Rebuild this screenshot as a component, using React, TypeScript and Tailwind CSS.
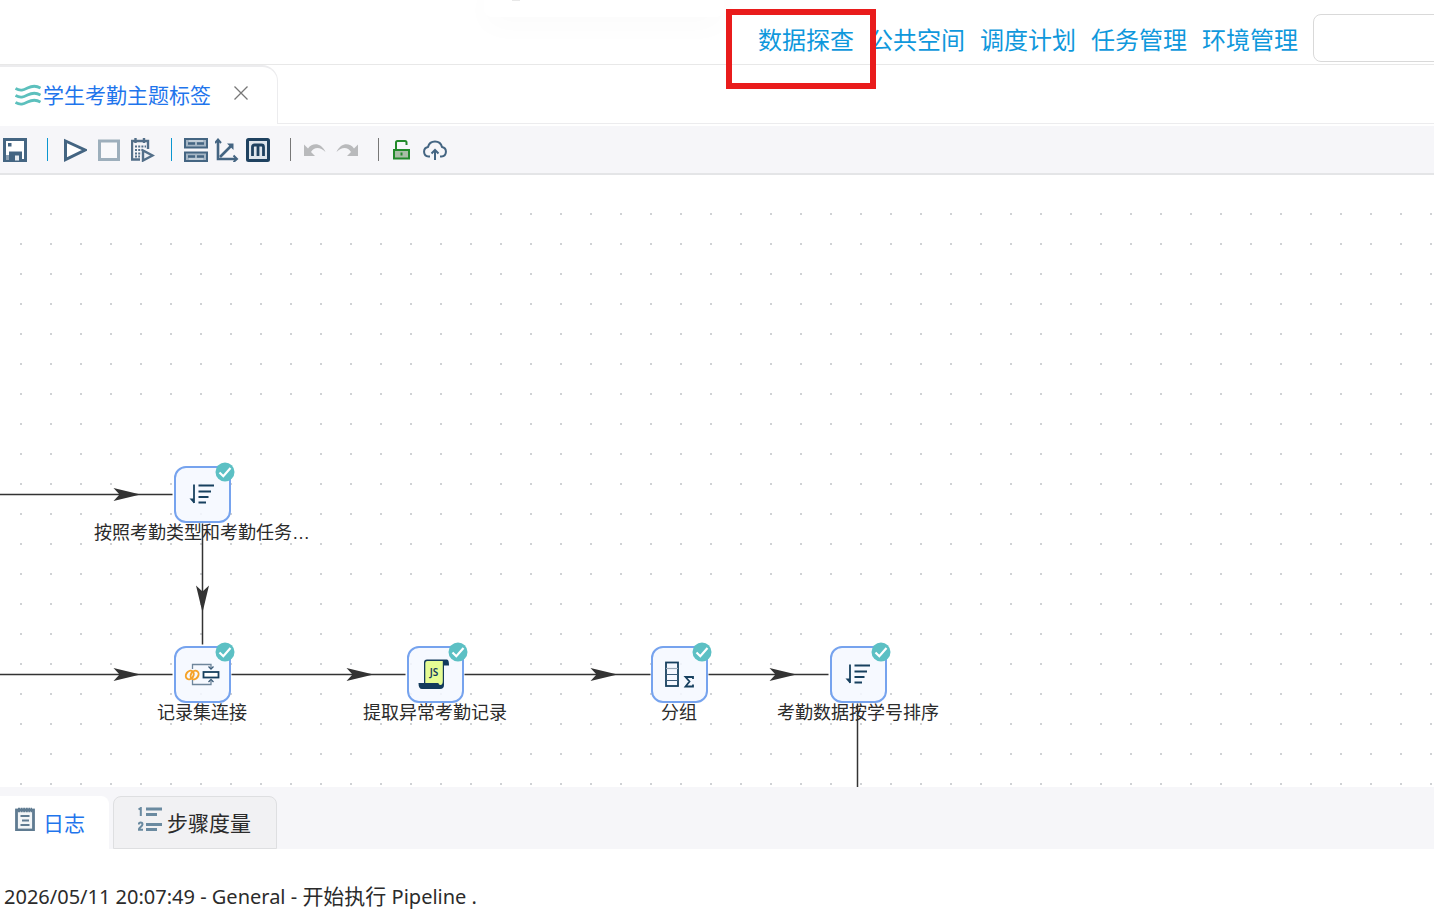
import React from 'react';
import clsx from 'clsx';

type NodeKind = 'sort' | 'join' | 'script' | 'group';

interface PipelineNode {
  id: string;
  kind: NodeKind;
  label: string;
  x: number;
  y: number;
}

interface Edge {
  from: [number, number];
  to: [number, number];
  // tip of the arrow head, left out where the head is off screen
  arrow?: [number, number];
}

const NAV_LINKS = ['数据探查', '公共空间', '调度计划', '任务管理', '环境管理'];

// x and y are the centre of the node box
const NODES: PipelineNode[] = [
  { id: 'sort-type', kind: 'sort', label: '按照考勤类型和考勤任务…', x: 202, y: 319 },
  { id: 'join', kind: 'join', label: '记录集连接', x: 202, y: 499 },
  { id: 'script', kind: 'script', label: '提取异常考勤记录', x: 435, y: 499 },
  { id: 'group', kind: 'group', label: '分组', x: 679, y: 499 },
  { id: 'sort-id', kind: 'sort', label: '考勤数据按学号排序', x: 858, y: 499 },
];

const EDGES: Edge[] = [
  { from: [-2, 319], to: [172, 319], arrow: [140, 319] },
  { from: [-2, 499], to: [172, 499], arrow: [140, 499] },
  { from: [202, 348], to: [202, 469], arrow: [202, 437] },
  { from: [231, 499], to: [405, 499], arrow: [373, 499] },
  { from: [464, 499], to: [650, 499], arrow: [617, 499] },
  { from: [708, 499], to: [828, 499], arrow: [796, 499] },
  { from: [857, 528], to: [857, 700] },
];

function SaveIcon() {
  return (
    <svg viewBox="0 0 24 24" className="h-6 w-6">
      <path d="M1.5 1.5h21v21h-21z" fill="#fff" stroke="#446582" strokeWidth="3" />
      <rect x="5" y="5" width="3.500" height="3.500" fill="#446582" />
      <path d="M6 13.500h13V24H6z" fill="#446582" />
      <rect x="12" y="17.500" width="4" height="5" fill="#e6ebf0" />
      <path d="M3 17h3v5H3z" fill="#8ca0b3" />
    </svg>
  );
}

function PlayIcon() {
  return (
    <svg viewBox="0 0 24 24" className="h-6 w-6">
      <path d="M2.500 3v18.500L22 12z" fill="#fff" stroke="#446582" strokeWidth="3" />
    </svg>
  );
}

function StopIcon() {
  return (
    <svg viewBox="0 0 24 24" className="h-6 w-6">
      <rect x="2.500" y="3" width="19" height="18.500" fill="#f8f9fb" stroke="#9dafbc" strokeWidth="3" />
    </svg>
  );
}

function ScheduleIcon() {
  return (
    <svg viewBox="0 0 24 24" className="h-6 w-6" fill="none" stroke="#536f89">
      <path d="M9 21.500H1V3h16v8" strokeWidth="2.400" />
      <path d="M4.500 0v5M13 0v5" strokeWidth="2.400" />
      <path d="M4 8.500h11M4 12h8M4 15.500h6M4 18.500h5" strokeWidth="2.200" strokeDasharray="2 1.200" />
      <path d="M12 12.500v10L21.500 17.500z" fill="#eef1f5" strokeWidth="2.400" />
    </svg>
  );
}

function ServersIcon() {
  return (
    <svg viewBox="0 0 24 24" className="h-6 w-6">
      <g fill="#a5b6c5" stroke="#446582" strokeWidth="2">
        <path d="M1 1h22v8.500H1zM1 14.500h22V23H1z" />
      </g>
      <path d="M4 5.500h7M13 5.500h7M4 18.500h7M13 18.500h7" stroke="#446582" strokeWidth="2.500" />
      <path d="M5 3h14M5 21h14" stroke="#dfe6ec" strokeWidth="1" />
    </svg>
  );
}

function AxesIcon() {
  return (
    <svg viewBox="0 0 24 24" className="h-6 w-6" fill="none" stroke="#446582" strokeWidth="2.600">
      <path d="M3 2v19h18" />
      <path d="M0 5l3-3.500L6 5M18.500 17.500L22 21l-3.500 3" strokeWidth="2" />
      <path d="M5 19L16.500 7.500" />
      <path d="M12 5.500h6.500V12z" fill="#446582" stroke="none" />
    </svg>
  );
}

function MetricsIcon() {
  return (
    <svg viewBox="0 0 24 24" className="h-6 w-6" fill="none" stroke="#1f4260">
      <rect x="1.500" y="1.500" width="21" height="21" rx="1" fill="#dfe6ec" strokeWidth="3" />
      <path d="M6.500 18V9q0-2 2-2h7q2 0 2 2v9M12 7v11" strokeWidth="2.800" />
    </svg>
  );
}

function UndoIcon({ flipped = false }: { flipped?: boolean }) {
  return (
    <svg viewBox="0 0 24 24" className={clsx('h-6 w-6', flipped && '-scale-x-100')}>
      <path d="M1 6.500v11.500h11l-4-4c3-5 9-5.500 14.500 0C18 4.500 9.500 4.500 5 10.500z" fill="#b9babc" />
    </svg>
  );
}

function UnlockIcon() {
  return (
    <svg viewBox="0 0 24 24" className="h-6 w-6" fill="none" stroke="#238a2b" strokeWidth="2">
      <path d="M7 11V4.500q0-1.500 1.500-1.500H16q1.500 0 1.500 1.500V7" />
      <rect x="5" y="12" width="15" height="8.500" fill="#a9bda6" />
      <path d="M12.500 14.500v3" />
    </svg>
  );
}

function CloudUploadIcon() {
  return (
    <svg viewBox="0 0 24 24" className="h-6 w-6" fill="none" stroke="#446582" strokeWidth="2">
      <path d="M7 18.500H5.500A4.800 4.800 0 0 1 5 9a7.200 7.200 0 0 1 14 0a4.800 4.800 0 0 1-.5 9.500H17" />
      <path d="M12 22V12M8.500 15.500L12 12l3.500 3.500" />
    </svg>
  );
}

function WavesIcon() {
  return (
    <svg viewBox="0 0 26 22" className="h-[22px] w-[26px]" fill="none" stroke="#5cc0bd" strokeWidth="2.800">
      <path d="M.5 4.500c5 3 8 1.500 12-.5s8-3 13 0" />
      <path d="M.5 11.500c5 3 8 1.500 12-.5s8-3 13 0" />
      <path d="M.5 18.500c5 3 8 1.500 12-.5s8-3 13 0" />
    </svg>
  );
}

function LogIcon() {
  return (
    <svg viewBox="0 0 20 24" className="h-6 w-5" fill="none" stroke="#5f7b91">
      <rect x="1.500" y="3" width="17" height="20" fill="#f2f5f7" strokeWidth="2.800" />
      <path d="M3 3h14" strokeWidth="4.500" strokeDasharray="2 .6" />
      <path d="M5.500 9h9M7 13.500h7M5.500 18h9" strokeWidth="2" />
    </svg>
  );
}

function StepsIcon() {
  return (
    <svg viewBox="0 0 24 24" className="h-6 w-6" fill="none" stroke="#6a8aa0">
      <path d="M8 2h16M8 7.500h11M8 17.500h16M8 22.500h11" strokeWidth="2.800" />
      <path d="M.5 2.500L2.800 1v8" strokeWidth="2" />
      <path d="M.8 17.500c0-2.800 3.700-2.600 3.700-.3C4.500 19.500.8 20.500.8 22.800H5" strokeWidth="2" />
    </svg>
  );
}

function NodeGlyph({ kind }: { kind: NodeKind }) {
  if (kind === 'sort') {
    return (
      <svg viewBox="0 0 36 36" className="h-9 w-9" fill="none" stroke="#17405f" strokeWidth="1.800">
        <path d="M10 7.500v18.500" />
        <path d="M5.500 21.500H10v5z" fill="#17405f" stroke="none" />
        <path d="M14.500 8.500H30M14.500 14.500h12.500M14.500 20h10M14.500 25.500h7.500" />
      </svg>
    );
  }
  if (kind === 'join') {
    return (
      <svg viewBox="0 0 36 36" className="h-9 w-9" fill="none">
        <g stroke="#6f869b" strokeWidth="1.300">
          <path d="M8.500 12V7.500h18.500V12M8.500 23v4.500H27V24" />
          <path d="M24.500 9.500l2.500 2.500 2.500-2.500M24.500 25l2.500-2.500 2.500 2.500" stroke="#3c5c78" />
        </g>
        <g stroke="#f5a32a" strokeWidth="2">
          <ellipse cx="5.800" cy="18" rx="3.600" ry="4.600" transform="rotate(35 5.800 18)" />
          <ellipse cx="10.600" cy="18" rx="3.600" ry="4.600" transform="rotate(35 10.600 18)" />
        </g>
        <rect x="19.500" y="15" width="15" height="5.500" fill="#fff" stroke="#17405f" strokeWidth="1.800" />
      </svg>
    );
  }
  if (kind === 'script') {
    return (
      <svg viewBox="0 0 36 36" className="h-9 w-9">
        <path d="M7 5.500q0-3 3-3h20q2 0 2 6h-5V28q0 4-4 4H5q-3.500 0-3.500-6H7z" fill="#123a5c" />
        <path d="M8.300 6q0-2 2-2h15.500V24q0 4-2.500 4-1.500 0-2-2H8.300z" fill="#e5fc94" />
        <text
          x="17"
          y="19"
          textAnchor="middle"
          className="font-['Noto_Sans'] text-[10px] font-semibold"
          fill="#123a5c"
        >
          JS
        </text>
      </svg>
    );
  }
  return (
    <svg viewBox="0 0 36 36" className="h-9 w-9">
      <rect x="5" y="5.500" width="12" height="23.500" fill="#f5f8ff" stroke="#17405f" strokeWidth="1.800" />
      <path d="M5 11.500h12" stroke="#9aa9b8" strokeWidth="1.200" />
      <path d="M5 17.500h12M5 23.500h12" stroke="#3c5c78" strokeWidth="1.200" />
      <path
        d="M32 22v-2H24.500l4 4.500-4 5H32v-2"
        fill="none"
        stroke="#17405f"
        strokeWidth="1.800"
      />
    </svg>
  );
}

function NodeCard({ node }: { node: PipelineNode }) {
  return (
    <div
      className="absolute flex w-60 -translate-x-1/2 flex-col items-center"
      style={{ left: node.x, top: node.y - 28 }}
    >
      <div className="relative flex h-[57px] w-[57px] items-center justify-center rounded-xl border-2 border-[#76a3ee] bg-[#f5f8ff]/85">
        <NodeGlyph kind={node.kind} />
        <svg viewBox="0 0 20 20" className="absolute -top-[6px] -right-[6px] h-5 w-5">
          <circle cx="10" cy="10" r="9.500" fill="#5cc0c4" />
          <path d="M4.500 10.500l3.800 3.700L15.500 6" fill="none" stroke="#fff" strokeWidth="2.200" />
        </svg>
      </div>
      <span className="font-['Liberation_Sans','Noto_Sans_CJK_SC',sans-serif] text-[18px] leading-5 whitespace-nowrap text-[#2b2b2b]">
        {node.label}
      </span>
    </div>
  );
}

function ArrowHead({ edge }: { edge: Edge }) {
  if (!edge.arrow) return null;
  const [x, y] = edge.arrow;
  const angle = edge.from[0] === edge.to[0] ? 90 : 0;
  return (
    <path
      d="M0 0L-27-6.500L-21 0L-27 6.500z"
      fill="#333"
      transform={`translate(${x} ${y}) rotate(${angle})`}
    />
  );
}

function Canvas() {
  return (
    <main className="relative min-h-0 flex-1 overflow-hidden bg-white">
      <div className="absolute inset-x-0 top-6 bottom-0 bg-[radial-gradient(circle,#d0d2d5_1px,transparent_1px)] bg-[length:30px_30px] bg-[position:6px_0px]" />
      <svg className="absolute inset-0 h-full w-full">
        <g transform="translate(.5 .5)">
          {EDGES.map((edge, i) => (
            <g key={i}>
              <line
                x1={edge.from[0]}
                y1={edge.from[1]}
                x2={edge.to[0]}
                y2={edge.to[1]}
                stroke="#333"
                strokeWidth="1.500"
              />
              <ArrowHead edge={edge} />
            </g>
          ))}
        </g>
      </svg>
      {NODES.map((node) => (
        <NodeCard key={node.id} node={node} />
      ))}
    </main>
  );
}

function ToolButton({ label, children }: { label: string; children: React.ReactNode }) {
  return (
    <button type="button" aria-label={label} className="h-6 w-6 shrink-0">
      {children}
    </button>
  );
}

function Toolbar() {
  return (
    <div className="flex h-[49px] shrink-0 items-center border-b-2 border-[#e4e5e7] bg-[#f6f6f9] pl-[3px]">
      <ToolButton label="保存"><SaveIcon /></ToolButton>
      <div className="mr-[15px] ml-5 h-[23px] w-px bg-[#0a96d0]" />
      <div className="flex gap-[10px]">
        <ToolButton label="运行"><PlayIcon /></ToolButton>
        <ToolButton label="停止"><StopIcon /></ToolButton>
        <ToolButton label="定时运行"><ScheduleIcon /></ToolButton>
      </div>
      <div className="mr-3 ml-4 h-[23px] w-px bg-[#0a96d0]" />
      <div className="flex gap-[7px]">
        <ToolButton label="集群"><ServersIcon /></ToolButton>
        <ToolButton label="坐标"><AxesIcon /></ToolButton>
        <ToolButton label="度量"><MetricsIcon /></ToolButton>
      </div>
      <div className="mr-3 ml-5 h-[23px] w-px bg-[#777]" />
      <div className="flex gap-2">
        <ToolButton label="撤销"><UndoIcon /></ToolButton>
        <ToolButton label="重做"><UndoIcon flipped /></ToolButton>
      </div>
      <div className="mr-[10px] ml-[19px] h-[23px] w-px bg-[#777]" />
      <div className="flex gap-[10px]">
        <ToolButton label="解锁"><UnlockIcon /></ToolButton>
        <ToolButton label="上传"><CloudUploadIcon /></ToolButton>
      </div>
    </div>
  );
}

function Header() {
  return (
    <header className="relative flex h-[65px] shrink-0 items-start border-b border-[#e8e8e8] pt-[14px]">
      {/* lower edge of the floating card above the header */}
      <div className="absolute -top-4 left-[484px] h-[33px] w-60 rounded-lg bg-white shadow-[0_10px_30px_rgba(0,0,0,0.02)]" />
      <div className="absolute top-0 left-[512px] h-px w-2 bg-[#e8e8e8]" />
      <nav className="ml-auto flex gap-[15px] pt-[10px] pr-[15px] text-[24px] leading-8 whitespace-nowrap text-[#0f98dc]">
        {NAV_LINKS.map((label, i) => (
          <a key={label} href="#" className="relative">
            {label}
            {i === 0 && (
              <span className="absolute -top-[15px] -left-8 z-10 h-20 w-[150px] border-6 border-[#e91c1c]" />
            )}
          </a>
        ))}
      </nav>
      <div className="w-[121px] overflow-hidden">
        <input
          type="text"
          aria-label="搜索"
          className="block h-12 w-[200px] rounded-lg border border-[#d9d9d9] bg-white px-3 text-base outline-none"
        />
      </div>
    </header>
  );
}

function FileTabs() {
  return (
    <div className="flex h-[61px] shrink-0 bg-white pb-[2px]">
      <div className="flex w-[278px] items-center rounded-tr-2xl border-t-2 border-r border-[#ececee] pb-px pl-[15px]">
        <WavesIcon />
        <span className="ml-[2px] text-[21px] leading-8 text-[#1f75ec]">学生考勤主题标签</span>
        <button type="button" aria-label="关闭" className="mb-1 ml-[22px]">
          <svg viewBox="0 0 16 16" className="h-4 w-4" stroke="#777" strokeWidth="1.300">
            <path d="M1.500 1.500l13 13M14.500 1.500l-13 13" />
          </svg>
        </button>
      </div>
      <div className="flex-1 border-b border-[#ececee]" />
    </div>
  );
}

function BottomPanel() {
  return (
    <section className="h-[132px] shrink-0">
      <div className="flex h-[62px] items-end gap-1 bg-[#f6f6f9] text-[21px] leading-8">
        <button
          type="button"
          className="flex h-[53px] w-[109px] items-center rounded-tr-lg bg-white pl-[15px] text-[#1f75ec]"
        >
          <span className="mb-2"><LogIcon /></span>
          <span className="ml-2">日志</span>
        </button>
        <button
          type="button"
          className="flex h-[53px] w-[164px] items-center rounded-t-lg border border-[#dedfe1] bg-[#f1f1f3] pl-6 text-[#2b2b2b]"
        >
          <span className="mb-2"><StepsIcon /></span>
          <span className="ml-[5px]">步骤度量</span>
        </button>
      </div>
      <p className="px-1 pt-[31px] text-[20px] leading-8 text-[#2b2b2b]">
        2026/05/11 20:07:49 - General - <span className="text-[21px]">开始执行</span> Pipeline .
      </p>
    </section>
  );
}

export default function App() {
  return (
    <div className="flex h-screen flex-col overflow-hidden bg-white font-['Noto_Sans','Noto_Sans_CJK_SC',sans-serif]">
      <Header />
      <FileTabs />
      <Toolbar />
      <Canvas />
      <BottomPanel />
    </div>
  );
}
